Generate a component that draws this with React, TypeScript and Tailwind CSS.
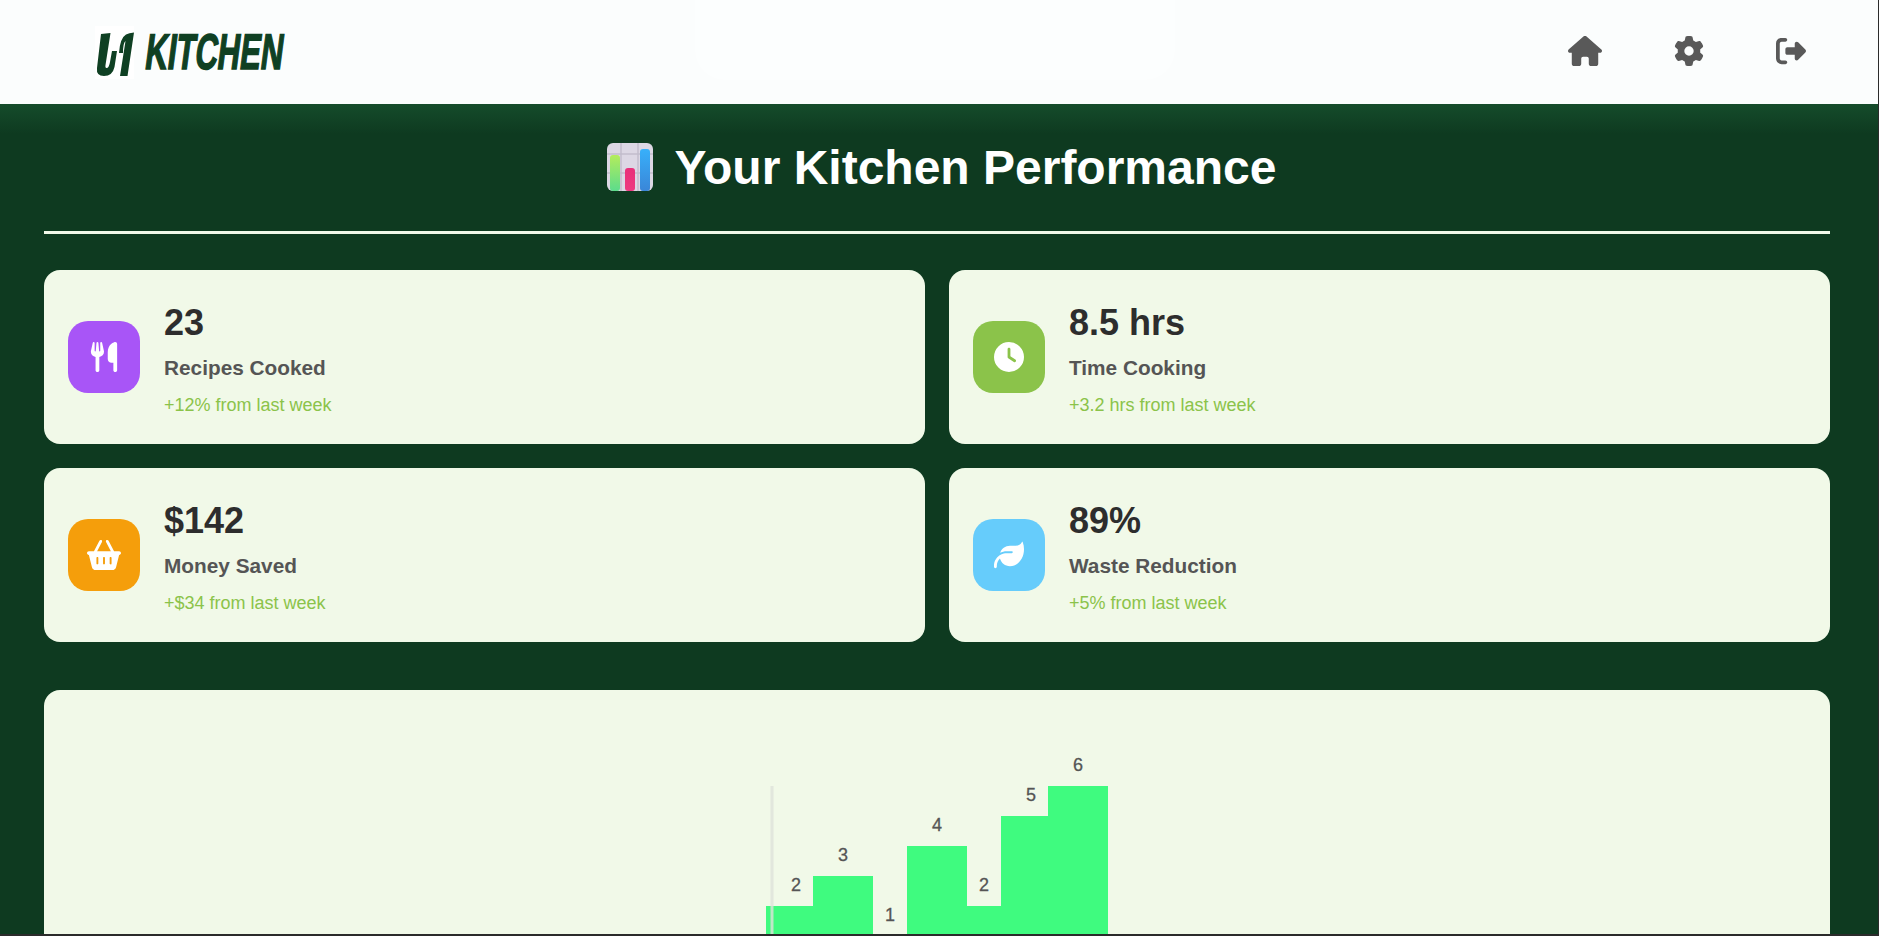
import { FaHouse, FaGear, FaRightFromBracket, FaUtensils, FaClock, FaBasketShopping, FaLeaf } from "react-icons/fa6";

const stats = [
  { value: "23", label: "Recipes Cooked", change: "+12% from last week", icon: FaUtensils, size: 30, color: "bg-[#a855f7]" },
  { value: "8.5 hrs", label: "Time Cooking", change: "+3.2 hrs from last week", icon: FaClock, size: 30, color: "bg-[#8bc34a]" },
  { value: "$142", label: "Money Saved", change: "+$34 from last week", icon: FaBasketShopping, size: 34, color: "bg-[#f59e0b]" },
  { value: "89%", label: "Waste Reduction", change: "+5% from last week", icon: FaLeaf, size: 30, color: "bg-[#66ccfb]" },
];

// x is the bar's left edge in the chart svg, overlapping bars as in the original
const bars = [
  { x: 29, n: 2 },
  { x: 76, n: 3 },
  { x: 123, n: 1 },
  { x: 170, n: 4 },
  { x: 217, n: 2 },
  { x: 264, n: 5 },
  { x: 311, n: 6 },
];

function LogoMark() {
  return (
    <svg width="39" height="53" viewBox="0 0 39 53" className="bg-white shrink-0">
      <path d="M6 8 L15.5 7 L10.5 39 Q10 42.5 12 42 Q14 41.5 15 36 L17 25 L22 25 L19.5 41 Q17.5 50 9 50 Q1 50 2 42 Z" fill="#0f4023" />
      <path d="M24 27 Q25 12 31 8.5 Q34 7 39 6.5 L32.5 50 L25 50 L30.5 15 Q28 17 28 27 Z" fill="#0f4023" />
    </svg>
  );
}

function ChartEmoji() {
  return (
    <svg width="46" height="48" viewBox="0 0 46 48" className="shrink-0">
      <defs>
        <linearGradient id="bar-green" x1="0" y1="0" x2="0" y2="1">
          <stop offset="0" stopColor="#b4ec5c" />
          <stop offset="1" stopColor="#5cdc8c" />
        </linearGradient>
        <linearGradient id="bar-pink" x1="0" y1="0" x2="0" y2="1">
          <stop offset="0" stopColor="#e8307a" />
          <stop offset="1" stopColor="#ee3a80" />
        </linearGradient>
        <linearGradient id="bar-blue" x1="0" y1="0" x2="0" y2="1">
          <stop offset="0" stopColor="#38b0fa" />
          <stop offset="1" stopColor="#3a86d8" />
        </linearGradient>
      </defs>
      <rect x="0" y="0" width="46" height="48" rx="6" fill="#dcd7e4" />
      <path d="M0 11H46M0 30H46M14 0V48M31 0V48" stroke="#c2bdcb" strokeWidth="1.5" />
      <rect x="3" y="12" width="10" height="36" rx="3" fill="url(#bar-green)" />
      <rect x="18" y="25" width="10" height="23" rx="3" fill="url(#bar-pink)" />
      <rect x="33" y="6" width="10" height="42" rx="3" fill="url(#bar-blue)" />
    </svg>
  );
}

export default function App() {
  return (
    <div className="h-[936px] overflow-hidden border-r border-b-2 border-[#2b2b2b] bg-[#0e3a20] font-['Liberation_Sans',Arial,sans-serif]">
      <header className="relative h-[104px] flex items-center justify-between bg-[#fbfdfd] pl-[95px] pr-[72px]">
        <div className="flex items-center gap-[12px]">
          <LogoMark />
          <span className="inline-block origin-left scale-x-[0.62] -skew-x-12 text-[50px] leading-none font-bold text-[#0f4023] [-webkit-text-stroke:1.5px_#0f4023]">
            KITCHEN
          </span>
        </div>
        <div className="absolute left-[695px] top-0 w-[480px] h-[80px] rounded-b-[30px] bg-white/40" />
        <nav className="flex items-center gap-[72px] pb-[2px] text-[#595959]">
          <FaHouse size={34} />
          <FaGear size={30} />
          <FaRightFromBracket size={30} />
        </nav>
      </header>

      <main className="bg-gradient-to-b from-[#154c2b] to-[#0e3a20] bg-[length:100%_30px] bg-no-repeat pl-[44px] pr-[48px]">
        <div className="h-[130px] border-b-[3px] border-[#f1f8e9] flex items-start justify-center gap-[22px] pt-[39px] pl-[9px]">
          <ChartEmoji />
          <h1 className="text-[48px] leading-[49px] font-bold text-white">Your Kitchen Performance</h1>
        </div>

        <div className="grid grid-cols-2 gap-6 mt-9">
          {stats.map((s) => (
            <div key={s.label} className="h-[174px] rounded-2xl bg-[#f1f9e8] flex items-center gap-6 px-6">
              <div className={`w-[72px] h-[72px] rounded-[20px] flex items-center justify-center text-white ${s.color}`}>
                <s.icon size={s.size} />
              </div>
              <div className="pt-[2px]">
                <div className="text-[36px] leading-[52px] font-bold text-[#2d2d2d]">{s.value}</div>
                <div className="text-[20.8px] leading-[32px] mt-[3px] font-bold text-[#555555]">{s.label}</div>
                <div className="text-[18px] leading-[28px] mt-[7px] text-[#8bc34a]">{s.change}</div>
              </div>
            </div>
          ))}
        </div>

        <div className="mt-12 h-[400px] rounded-2xl bg-[#f1f9e8] pt-10">
          <svg width="400" height="300" viewBox="0 0 400 300" className="block mx-auto font-['Liberation_Sans',Arial,sans-serif]">
            {bars.map((b) => (
              <g key={b.x}>
                <rect x={b.x} y={236 - b.n * 30} width="60" height={b.n * 30} fill="#3ffb7f" />
                <text x={b.x + 30} y={236 - b.n * 30 - 15} textAnchor="middle" fontSize="18" fill="#555555" stroke="#555555" strokeWidth="0.3">
                  {b.n}
                </text>
              </g>
            ))}
            <line x1="35" y1="56" x2="35" y2="236" stroke="#dfe2da" strokeOpacity="0.8" strokeWidth="3" />
          </svg>
        </div>
      </main>
    </div>
  );
}
